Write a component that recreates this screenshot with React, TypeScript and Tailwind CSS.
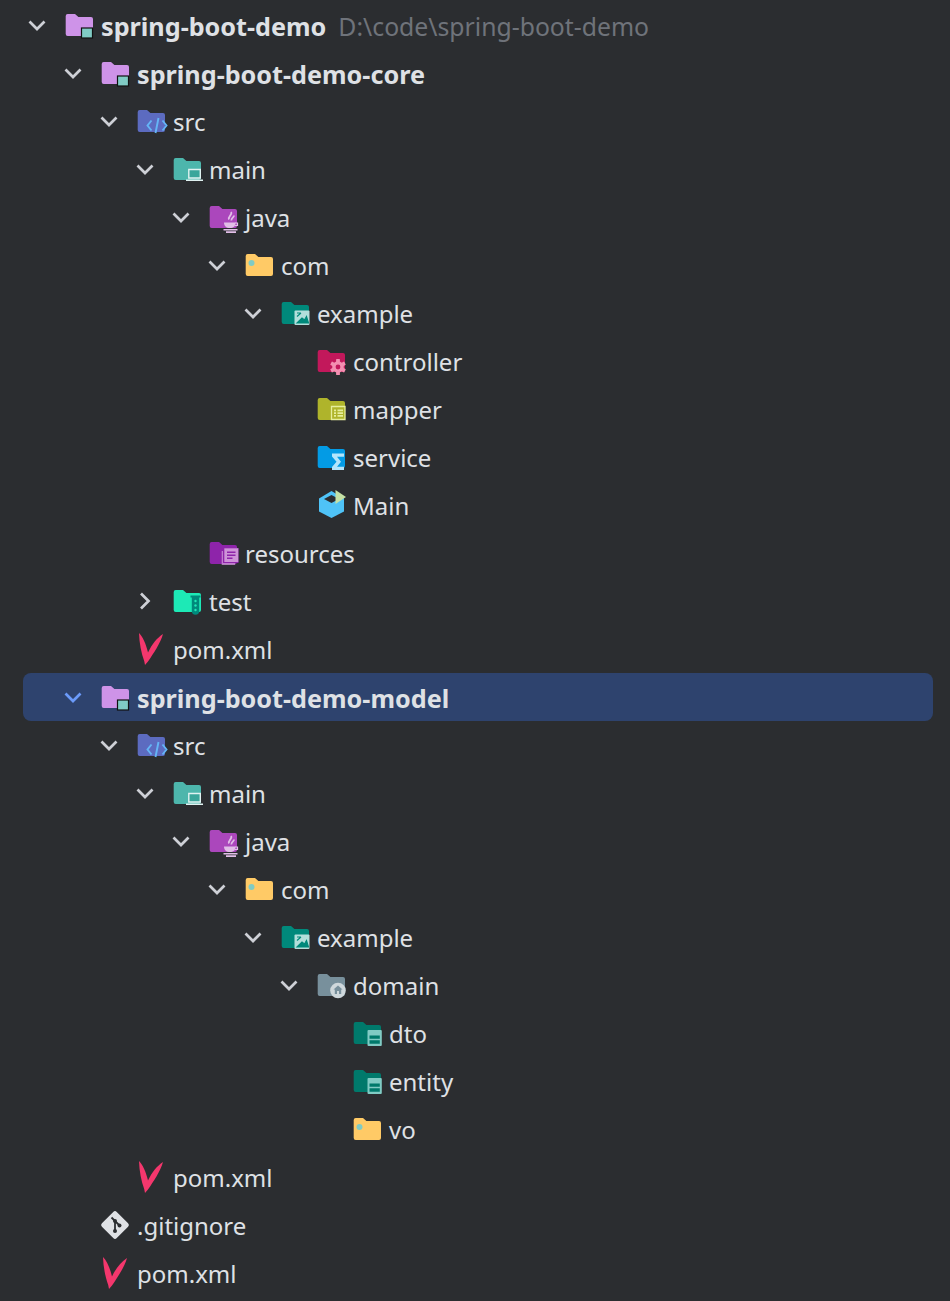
import type { ReactNode } from 'react';

const FOLDER = 'M4.7 5H12l3.4 3H28a2 2 0 0 1 2 2v15a2 2 0 0 1-2 2H4.7a2 2 0 0 1-2-2V7a2 2 0 0 1 2-2z';

function Svg({ children }: { children: ReactNode }) {
  return (
    <svg viewBox="0 0 32 32" className="h-8 w-8 shrink-0 overflow-visible" aria-hidden="true">
      {children}
    </svg>
  );
}

function Folder({ color, children }: { color: string; children?: ReactNode }) {
  return (
    <Svg>
      <path d={FOLDER} fill={color} />
      {children}
    </Svg>
  );
}

const bg = '#2b2d30';

const icons: Record<string, ReactNode> = {
  project: (
    <Folder color="#ce93e8">
      <rect x="18.5" y="19" width="11" height="10" fill="#80cbc4" stroke="#111" strokeWidth="1.2" />
    </Folder>
  ),
  src: (
    <Folder color="#5c6bc0">
      <path d="M16.5 15.5l-4 5 4 5M27.5 15.5l4 5-4 5M23.5 13l-3 15" fill="none" stroke="#64b5f6" strokeWidth="1.9" />
    </Folder>
  ),
  main: (
    <Folder color="#4db6ac">
      <path d="M17.800 16.500h11.500v8.500H17.800z" fill="#3aa69b" stroke="#e0f2f1" strokeWidth="1.400" />
      <path d="M15 26.500h17V28H15z" fill="#e0f2f1" />
    </Folder>
  ),
  java: (
    <Folder color="#ab47bc">
      <path d="M24 11c2 2.500-3.500 4.500-2 7.500M27 14.500c0 2-3 2.500-2.500 5" fill="none" stroke="#e1bee7" strokeWidth="1.800" />
      <path d="M17 21.500h11.500v.5c0 3-2 5-5.700 5S17 25 17 21.500z" fill="#e1bee7" />
      <path d="M28 22h2.500v2.500H28" fill="none" stroke="#e1bee7" strokeWidth="1.200" />
      <path d="M16.500 28h14v1.500h-14zM19 30.300h10v1.700H19z" fill="#e1bee7" />
    </Folder>
  ),
  plain: (
    <Folder color="#ffca66">
      <circle cx="8.500" cy="14" r="3" fill="#80cbc4" />
    </Folder>
  ),
  example: (
    <Folder color="#00897b">
      <rect x="15.500" y="13.500" width="15" height="14.500" rx="1" fill="#b2dfdb" />
      <path d="M18 16h3.500M18 19.500l4-3.500M18 26l5-5 2.500 2 2-3.500 2 6.500z" fill="#00897b" stroke="#00897b" strokeWidth="1.100" />
    </Folder>
  ),
  controller: (
    <Folder color="#c2185b">
      {[0, 60, 120].map(a => (
        <rect key={a} x="21.100" y="14" width="3.800" height="16" rx=".6" transform={`rotate(${a} 23 22)`} fill="#f48fb1" />
      ))}
      <circle cx="23" cy="22" r="5.800" fill="#f48fb1" />
      <circle cx="23" cy="22" r="2.400" fill="#c2185b" />
    </Folder>
  ),
  mapper: (
    <Folder color="#afb42b">
      <path d="M16.500 13.500H30V26.500H16.500z" fill="#afb42b" stroke="#e6ee9c" strokeWidth="1.300" />
      <path d="M19 16.500h2v1.700h-2zM22.500 16.500H28v1.700h-5.500zM19 19.300h2V21h-2zM22.500 19.300H28V21h-5.500zM19 22h2v1.700h-2zM22.500 22H28v1.700h-5.500z" fill="#e6ee9c" />
    </Folder>
  ),
  service: (
    <Folder color="#039be5">
      <path d="M17 12.500h12v3.300h-7l4 5-4 5h7v3.200H17v-3l4.500-5.200-4.500-5.300z" fill="#b3e5fc" />
    </Folder>
  ),
  cube: (
    <Svg>
      <path d="M16.500 2L29 9.500v13L16.500 29 4 22.500v-13z" fill="#4fc3f7" />
      <path d="M16.500 6L24 10l-7.500 4L9 10z" fill={bg} />
      <path d="M20.500 1L31 8l-10.500 7z" fill="#c5e1a5" />
    </Svg>
  ),
  resources: (
    <Folder color="#8e24aa">
      <path d="M14.700 14h13.500v14H14.700z" fill="#ce93d8" opacity=".8" />
      <path d="M16 11h15.500v15H16z" fill="#8e24aa" />
      <path d="M17.300 11.300h14v13.700h-14z" fill="#ce93d8" />
      <path d="M20 14.500h8.500V16H20zM20 17.500h8.500V19H20zM20 20.500h5.500V22H20z" fill="#8e24aa" />
    </Folder>
  ),
  test: (
    <Folder color="#1de9b6">
      <path d="M19.500 10.500h10v2h-1.300v13.500a3.700 3.700 0 0 1-7.400 0V12.500h-1.300z" fill="#00897b" />
      <circle cx="24.500" cy="16" r="1.200" fill="#1de9b6" />
      <circle cx="24.500" cy="20.500" r="1.200" fill="#1de9b6" />
      <circle cx="24.500" cy="25" r="1.200" fill="#1de9b6" />
    </Folder>
  ),
  domain: (
    <Folder color="#78909c">
      <circle cx="23" cy="21.500" r="7.800" fill="#cfd8dc" />
      <path d="M23 16.500l4.500 4h-1.300V25H24v-3h-2v3h-2.200v-4.500h-1.300z" fill="#78909c" />
    </Folder>
  ),
  entity: (
    <Folder color="#00796b">
      <rect x="16.500" y="13" width="14.300" height="16" rx="1" fill="#80cbc4" />
      <path d="M18.500 18.500h10.300v3.300H18.500zM18.500 23.300h10.300v3.500H18.500z" fill="#00796b" />
    </Folder>
  ),
  maven: (
    <Svg>
      <path
        d="M4 0c3.500 3.500 7 10.500 9 19.500C17 11 22 5 28 1c-2.500 9-9.500 19.500-15 27.500L10 32l-.800-4C6.300 20 4.300 10 4 0z"
        fill="#f4376d"
      />
    </Svg>
  ),
  git: (
    <Svg>
      <rect x="5.500" y="5.500" width="21" height="21" rx="2.500" transform="rotate(45 16 16)" fill="#dfe1e5" />
      <path d="M12.500 8.500l8 8M16 12v9" fill="none" stroke={bg} strokeWidth="1.800" />
      <circle cx="16" cy="12" r="2" fill={bg} />
      <circle cx="20.500" cy="16.500" r="2" fill={bg} />
      <circle cx="16" cy="22" r="2" fill={bg} />
    </Svg>
  ),
};

type Node = {
  label: string;
  icon: string;
  depth: number;
  arrow?: 'down' | 'right';
  bold?: boolean;
  path?: string;
  selected?: boolean;
};

const rows: Node[] = [
  { label: 'spring-boot-demo', icon: 'project', depth: 0, arrow: 'down', bold: true, path: 'D:\\code\\spring-boot-demo' },
  { label: 'spring-boot-demo-core', icon: 'project', depth: 1, arrow: 'down', bold: true },
  { label: 'src', icon: 'src', depth: 2, arrow: 'down' },
  { label: 'main', icon: 'main', depth: 3, arrow: 'down' },
  { label: 'java', icon: 'java', depth: 4, arrow: 'down' },
  { label: 'com', icon: 'plain', depth: 5, arrow: 'down' },
  { label: 'example', icon: 'example', depth: 6, arrow: 'down' },
  { label: 'controller', icon: 'controller', depth: 7 },
  { label: 'mapper', icon: 'mapper', depth: 7 },
  { label: 'service', icon: 'service', depth: 7 },
  { label: 'Main', icon: 'cube', depth: 7 },
  { label: 'resources', icon: 'resources', depth: 4 },
  { label: 'test', icon: 'test', depth: 3, arrow: 'right' },
  { label: 'pom.xml', icon: 'maven', depth: 2 },
  { label: 'spring-boot-demo-model', icon: 'project', depth: 1, arrow: 'down', bold: true, selected: true },
  { label: 'src', icon: 'src', depth: 2, arrow: 'down' },
  { label: 'main', icon: 'main', depth: 3, arrow: 'down' },
  { label: 'java', icon: 'java', depth: 4, arrow: 'down' },
  { label: 'com', icon: 'plain', depth: 5, arrow: 'down' },
  { label: 'example', icon: 'example', depth: 6, arrow: 'down' },
  { label: 'domain', icon: 'domain', depth: 7, arrow: 'down' },
  { label: 'dto', icon: 'entity', depth: 8 },
  { label: 'entity', icon: 'entity', depth: 8 },
  { label: 'vo', icon: 'plain', depth: 8 },
  { label: 'pom.xml', icon: 'maven', depth: 2 },
  { label: '.gitignore', icon: 'git', depth: 1 },
  { label: 'pom.xml', icon: 'maven', depth: 1 },
];

function Chevron({ dir, selected }: { dir?: 'down' | 'right'; selected?: boolean }) {
  return (
    <span className="flex h-8 w-[20px] shrink-0 items-center justify-center">
      {dir && (
        <svg viewBox="0 0 20 20" className="h-5 w-5" aria-hidden="true">
          <path
            d={dir === 'down' ? 'M2.500 6.500l7.500 7.500 7.500-7.500' : 'M6 2.500l7.500 7.500-7.500 7.500'}
            fill="none"
            stroke={selected ? '#6b9bfa' : '#ced0d6'}
            strokeWidth="2.700"
          />
        </svg>
      )}
    </span>
  );
}

function Row({ node }: { node: Node }) {
  return (
    <div
      className={`ml-[23px] mr-[17px] flex h-12 items-center rounded-lg ${node.selected ? 'bg-[#2e436e]' : ''}`}
      style={{ paddingLeft: 4 + node.depth * 36 }}
    >
      <Chevron dir={node.arrow} selected={node.selected} />
      <span className="ml-4 flex">{icons[node.icon]}</span>
      <span
        className={`ml-[6px] whitespace-nowrap text-[#dfe1e5] ${
          node.bold ? 'translate-y-[2px] text-[25.2px] font-bold' : 'translate-y-[1px] text-2xl'
        }`}
      >
        {node.label}
      </span>
      {node.path && (
        <span className="ml-[12px] translate-y-[2px] whitespace-nowrap text-[24.75px] text-[#6f737a]">{node.path}</span>
      )}
    </div>
  );
}

export default function App() {
  return (
    <div className="h-[1301px] w-[950px] overflow-hidden bg-[#2b2d30] pt-px font-['Noto_Sans',sans-serif] leading-none">
      {rows.map((node, i) => (
        <Row key={i} node={node} />
      ))}
    </div>
  );
}
